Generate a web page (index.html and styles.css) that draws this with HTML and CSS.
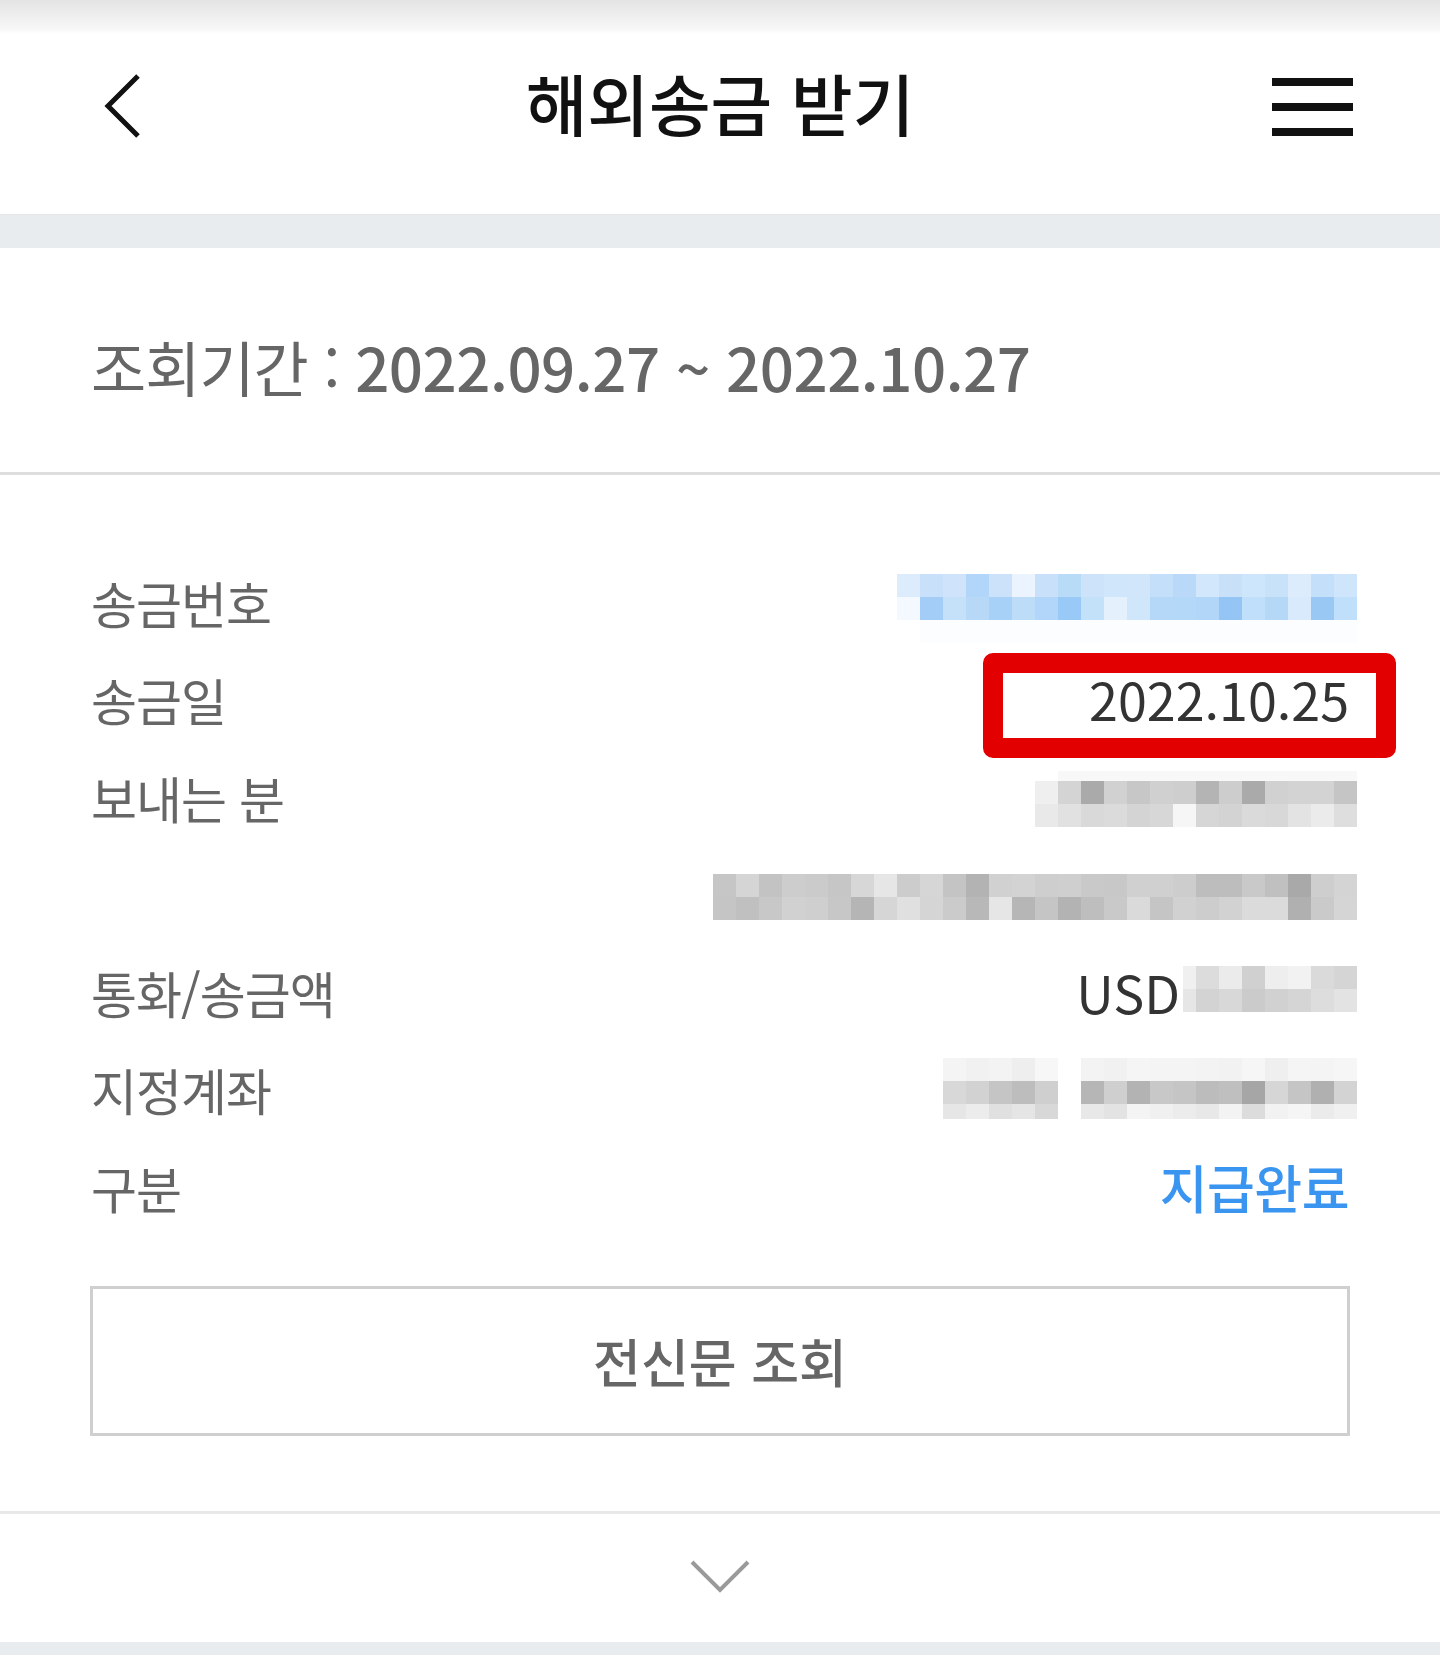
FILE: index.html
```html
<!DOCTYPE html>
<html lang="ko">

<head>
  <meta charset="UTF-8">
  <meta name="viewport" content="width=device-width, initial-scale=1.0">
  <title>해외송금 받기</title>
  <link rel="stylesheet" href="styles.css">
</head>

<body>

  <header class="header">
    <button class="icon-btn back" aria-label="뒤로">
      <svg width="44" height="70" viewBox="0 0 44 70">
        <polyline points="38,5 8,35 38,65" fill="none" stroke="#111" stroke-width="5" />
      </svg>
    </button>
    <h1 class="title">해외송금 받기</h1>
    <button class="icon-btn menu" aria-label="메뉴">
      <span></span><span></span><span></span>
    </button>
  </header>

  <div class="band"></div>

  <section class="period">
    <span class="period-label">조회기간 : </span><span class="period-date">2022.09.27 ~ 2022.10.27</span>
  </section>

  <section class="detail">
    <ul class="rows">
      <li class="row">
        <span class="label">송금번호</span>
        <div class="mosaic mz-no">
          <div class="r r1"></div>
          <div class="r r2"></div>
          <div class="r r3"></div>
        </div>
      </li>
      <li class="row">
        <span class="label">송금일</span>
        <span class="value">2022.10.25</span>
        <!-- 강조 표시 -->
        <span class="mark"></span>
      </li>
      <li class="row">
        <span class="label">보내는 분</span>
        <div class="mosaic mz-sender">
          <div class="r r0"></div>
          <div class="r r1"></div>
          <div class="r r2"></div>
        </div>
      </li>
      <li class="row">
        <span class="label"></span>
        <div class="mosaic mz-addr">
          <div class="r r1"></div>
          <div class="r r2"></div>
        </div>
      </li>
      <li class="row">
        <span class="label">통화/송금액</span>
        <div class="amount">
          <span class="value">USD</span>
          <div class="mosaic mz-amount">
            <div class="r r1"></div>
            <div class="r r2"></div>
          </div>
        </div>
      </li>
      <li class="row">
        <span class="label">지정계좌</span>
        <div class="mosaic mz-account">
          <div class="r r1"></div>
          <div class="r r2"></div>
          <div class="r r3"></div>
        </div>
      </li>
      <li class="row">
        <span class="label">구분</span>
        <span class="value status">지급완료</span>
      </li>
    </ul>

    <button class="msg-btn">전신문 조회</button>
  </section>

  <footer class="more">
    <svg width="64" height="36" viewBox="0 0 64 36">
      <polyline points="4,4 32,32 60,4" fill="none" stroke="#9a9a9a" stroke-width="4" />
    </svg>
  </footer>

  <div class="band band-bottom"></div>

</body>
</html>
```

FILE: styles.css
```css
* {
  box-sizing: border-box;
}

body {
  margin: 0;
  background: #fff;
  font-family: "Noto Sans CJK KR", "Noto Sans", sans-serif;
  color: #666;
}

/* 상단 헤더 */
.header {
  height: 214px;
  padding: 2px 87px 4px;
  display: grid;
  grid-template-columns: 1fr auto 1fr;
  align-items: center;
  background: linear-gradient(#e4e4e4, #f8f8f8 30px, #fff 34px);
}

.icon-btn {
  background: none;
  border: none;
  padding: 0;
  cursor: pointer;
}

.back {
  justify-self: start;
  display: flex;
  margin-left: 13px;
}

.title {
  margin: 0 0 9px;
  font-size: 67px;
  font-weight: 500;
  line-height: 1;
  letter-spacing: 0;
  color: #111;
}

.menu {
  justify-self: end;
  width: 81px;
  display: flex;
  flex-direction: column;
  gap: 17px;
  margin-top: 2px;
}

.menu span {
  display: block;
  height: 8px;
  background: #111;
}

.band {
  height: 34px;
  background: #e9ecef;
  border-top: 1px solid #e6e6e6;
}

/* 조회기간 */
.period {
  height: 227px;
  padding: 12px 91px 0;
  display: flex;
  align-items: center;
  border-bottom: 3px solid #dedede;
  font-size: 60px;
  line-height: 1;
  color: #666;
}

.period-label {
  letter-spacing: -1px;
  white-space: pre;
}

.period-date {
  font-weight: 500;
  letter-spacing: -0.5px;
}

/* 상세 항목 */
.detail {
  padding: 78px 83px 75px 90px;
  border-bottom: 3px solid #e8e8e8;
}

.rows {
  list-style: none;
  margin: 0;
  padding: 0 0 0 1px;
}

.row {
  position: relative;
  height: 97.5px;
  display: flex;
  align-items: center;
  justify-content: space-between;
}

.label {
  font-size: 50px;
  letter-spacing: -1px;
  line-height: 1;
  color: #666;
}

.value {
  font-size: 52px;
  letter-spacing: 0;
  line-height: 1;
  color: #333;
  padding-right: 8px;
}

.status {
  font-weight: 500;
  color: #3a95f0;
  letter-spacing: -0.5px;
}

.mark {
  position: absolute;
  right: -39px;
  top: 50%;
  margin-top: -46px;
  width: 413px;
  height: 105px;
  border: 20px solid #e30000;
  border-radius: 10px;
}

.amount {
  display: flex;
  align-items: center;
}

.amount .value {
  padding-right: 3px;
}

/* 가려진 정보 (모자이크) */
.mosaic {
  display: flex;
  flex-direction: column;
  margin-top: 5px;
}

.mosaic .r {
  height: 23px;
}

.mz-no {
  width: 460px;
  margin-top: 13px;
}

.mz-no .r1 {
  background: linear-gradient(90deg, #dcecfd 0 23px, #c8e0fa 23px 46px, #cfe4fb 46px 69px, #b2d6fa 69px 92px, #cbe2fa 92px 115px, #ebf4fe 115px 138px, #c8e0f9 138px 161px, #b8dbf8 161px 184px, #cce3f9 184px 207px, #cfe6fb 207px 230px, #d1e6fb 230px 253px, #c3dffa 253px 276px, #bad9f8 276px 299px, #d2e7fb 299px 322px, #c8e1f9 322px 345px, #cde6fb 345px 368px, #c8e2f9 368px 391px, #dcecfc 391px 414px, #c3dff9 414px 437px, #cfe5fb 437px 460px);
}

.mz-no .r2 {
  background: linear-gradient(90deg, #f4f9ff 0 23px, #a3cdf6 23px 46px, #c5e1fa 46px 69px, #b8d8f7 69px 92px, #a8d1f8 92px 115px, #bcdcf8 115px 138px, #b2d6f9 138px 161px, #98c9f7 161px 184px, #c4e1fa 184px 207px, #e4f1fd 207px 230px, #d0e7fb 230px 253px, #b5d8f9 253px 276px, #b4d8f8 276px 299px, #b2d6f8 299px 322px, #94c5f5 322px 345px, #c0dffa 345px 368px, #b5d8f7 368px 391px, #d8eafb 391px 414px, #9ac8f5 414px 437px, #c0dffa 437px 460px);
}

.mz-no .r3 {
  background: linear-gradient(90deg, #fff 0 23px, #fbfdff 23px);
}

.mz-sender {
  width: 322px;
}

.mz-sender .r0 {
  height: 10px;
  background: linear-gradient(90deg, #fff 0 23px, #f8f8f8 23px);
}

.mz-sender .r1 {
  background: linear-gradient(90deg, #efefef 0 23px, #d4d4d4 23px 46px, #aaaaaa 46px 69px, #d1d1d1 69px 92px, #c7c7c7 92px 115px, #d0d0d0 115px 138px, #cecece 138px 161px, #b4b4b4 161px 184px, #cdcdcd 184px 207px, #aaaaaa 207px 230px, #d1d1d1 230px 253px, #d3d3d3 253px 276px, #d3d3d3 276px 299px, #c5c5c5 299px 322px);
}

.mz-sender .r2 {
  background: linear-gradient(90deg, #e9e9e9 0 23px, #e1e1e1 23px 46px, #d9d9d9 46px 69px, #dbdbdb 69px 92px, #d4d4d4 92px 115px, #d7d7d7 115px 138px, #f6f6f6 138px 161px, #d6d6d6 161px 184px, #d3d3d3 184px 207px, #dadada 207px 230px, #d8d8d8 230px 253px, #e3e3e3 253px 276px, #ebebeb 276px 299px, #dedede 299px 322px);
}

.mz-addr {
  width: 644px;
}

.mz-addr .r1 {
  background: linear-gradient(90deg, #c6c6c6 0 23px, #d5d5d5 23px 46px, #c3c3c3 46px 69px, #cdcdcd 69px 92px, #cbcbcb 92px 115px, #c6c6c6 115px 138px, #d7d7d7 138px 161px, #e6e6e6 161px 184px, #cccccc 184px 207px, #d6d6d6 207px 230px, #c4c4c4 230px 253px, #b3b3b3 253px 276px, #d1d1d1 276px 299px, #d3d3d3 299px 322px, #cecece 322px 345px, #cfcfcf 345px 368px, #c9c9c9 368px 391px, #c8c8c8 391px 414px, #d0d0d0 414px 437px, #d0d0d0 437px 460px, #cdcdcd 460px 483px, #bdbdbd 483px 506px, #bdbdbd 506px 529px, #c9c9c9 529px 552px, #c0c0c0 552px 575px, #a9a9a9 575px 598px, #cecece 598px 621px, #d4d4d4 621px 644px);
}

.mz-addr .r2 {
  background: linear-gradient(90deg, #c5c5c5 0 23px, #c0c0c0 23px 46px, #c8c8c8 46px 69px, #d1d1d1 69px 92px, #cfcfcf 92px 115px, #c7c7c7 115px 138px, #b5b5b5 138px 161px, #d6d6d6 161px 184px, #e0e0e0 184px 207px, #d5d5d5 207px 230px, #cbcbcb 230px 253px, #b8b8b8 253px 276px, #e6e6e6 276px 299px, #b6b6b6 299px 322px, #c5c5c5 322px 345px, #b3b3b3 345px 368px, #bebebe 368px 391px, #c9c9c9 391px 414px, #dadada 414px 437px, #c5c5c5 437px 460px, #d1d1d1 460px 483px, #cdcdcd 483px 506px, #d2d2d2 506px 529px, #dbdbdb 529px 552px, #dbdbdb 552px 575px, #b0b0b0 575px 598px, #cacaca 598px 621px, #d5d5d5 621px 644px);
}

.mz-amount {
  width: 174px;
  margin-top: 0;
  margin-bottom: 6px;
}

.mz-amount .r1 {
  background: linear-gradient(90deg, #f0f0f0 0 13px, #dcdcdc 13px 36px, #ebebeb 36px 59px, #d0d0d0 59px 82px, #eeeeee 82px 105px, #f2f2f2 105px 128px, #dadada 128px 151px, #d5d5d5 151px 174px);
}

.mz-amount .r2 {
  background: linear-gradient(90deg, #e6e6e6 0 13px, #d3d3d3 13px 36px, #d8d8d8 36px 59px, #cbcbcb 59px 82px, #d1d1d1 82px 105px, #d5d5d5 105px 128px, #dddddd 128px 151px, #e3e3e3 151px 174px);
}

.mz-account {
  width: 414px;
  margin-top: 0;
  margin-bottom: 2px;
}

.mz-account .r1 {
  background: linear-gradient(90deg, #f4f4f4 0 23px, #f1f1f1 23px 46px, #f3f3f3 46px 69px, #eeeeee 69px 92px, #f7f7f7 92px 115px, #fff 115px 138px, #f3f3f3 138px 161px, #f1f1f1 161px 184px, #f5f5f5 184px 207px, #f4f4f4 207px 230px, #f4f4f4 230px 253px, #f3f3f3 253px 276px, #f2f2f2 276px 299px, #f6f6f6 299px 322px, #efefef 322px 345px, #f5f5f5 345px 368px, #f4f4f4 368px 391px, #f6f6f6 391px 414px);
}

.mz-account .r2 {
  background: linear-gradient(90deg, #d8d8d8 0 23px, #d2d2d2 23px 46px, #c5c5c5 46px 69px, #bdbdbd 69px 92px, #cfcfcf 92px 115px, #fff 115px 138px, #b6b6b6 138px 161px, #cfcfcf 161px 184px, #b3b3b3 184px 207px, #c8c8c8 207px 230px, #c5c5c5 230px 253px, #bcbcbc 253px 276px, #bfbfbf 276px 299px, #a6a6a6 299px 322px, #d6d6d6 322px 345px, #c5c5c5 345px 368px, #b0b0b0 368px 391px, #d3d3d3 391px 414px);
}

.mz-account .r3 {
  height: 15px;
  background: linear-gradient(90deg, #e6e6e6 0 23px, #ececec 23px 46px, #e0e0e0 46px 69px, #e5e5e5 69px 92px, #d8d8d8 92px 115px, #fff 115px 138px, #e8e8e8 138px 161px, #e3e3e3 161px 184px, #f4f4f4 184px 207px, #f0f0f0 207px 230px, #ececec 230px 253px, #e8e8e8 253px 276px, #f3f3f3 276px 299px, #dcdcdc 299px 322px, #f2f2f2 322px 345px, #f5f5f5 345px 368px, #ebebeb 368px 391px, #f0f0f0 391px 414px);
}

/* 전신문 조회 버튼 */
.msg-btn {
  display: block;
  width: 1260px;
  height: 150px;
  margin-top: 50px;
  background: #fff;
  border: 3px solid #cfcfcf;
  font-family: inherit;
  font-size: 52px;
  font-weight: 500;
  letter-spacing: 0;
  color: #666;
  cursor: pointer;
}

.more {
  height: 128px;
  padding-bottom: 4px;
  display: flex;
  align-items: center;
  justify-content: center;
}

.band-bottom {
  height: 16px;
  border-top: none;
}
```
